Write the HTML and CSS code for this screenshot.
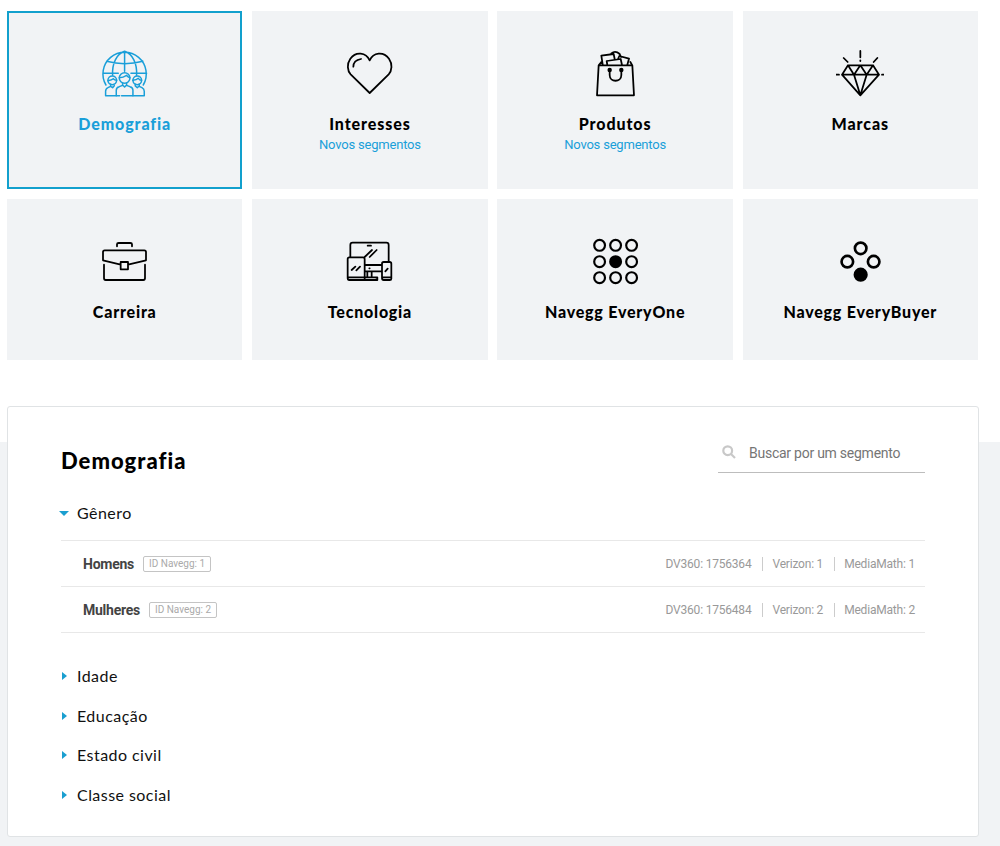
FILE: index.html
```html
<!DOCTYPE html>
<html lang="pt-BR">
<head>
<meta charset="utf-8">
<title>Segmentos</title>
<link rel="stylesheet" href="styles.css">
</head>
<body>
<main class="page">
  <nav class="cards">
    <a class="card card-active">
      <svg class="icon thin" viewBox="32.2 30 144 144">
        <path d="M47 135A65 65 0 1 1 159 135M103 34V94M38 100H84M122 100H169M49 64Q103 78 158 64M67 106C65 70 79 42 103 34C127 42 141 70 139 106"/>
        <circle cx="103" cy="114" r="16"/><path d="M87 113Q99 113 109 106Q113 112 119 113M97 129V135L103 141L109 135V129M78 167V151Q78 142 87 140L97 136M109 136L119 140Q128 142 128 151V167M78 167H88M94 167H128"/>
        <circle cx="66" cy="121" r="13"/><path d="M53 122Q65 120 69 116Q73 120 79 121M61 133V139L67 143L72 137M46 167V154Q46 146 53 143L61 139M46 167H78"/>
        <circle cx="141" cy="121" r="13"/><path d="M128 121Q139 120 144 115Q148 121 154 121M135 133V138L141 143L147 138V133M147 139L155 143Q162 147 162 154V167H128"/>
      </svg>
      <span class="name">Demografia</span>
    </a>
    <a class="card">
      <svg class="icon" viewBox="33 30 144 144">
        <path d="M104 159L47 103C37 92 35 72 46 56C63 33 93 37 104 61C115 37 145 33 162 56C173 72 171 92 161 103ZM55 80Q55 61 78 57"/>
      </svg>
      <span class="name">Interesses</span>
      <span class="note">Novos segmentos</span>
    </a>
    <a class="card">
      <svg class="icon" viewBox="33 30 144 144">
        <path d="M56 76H157L162 166H51ZM56 76L64 66M157 76L151 66M68 73L64 47L101 42L104 57M82 75L80 63L122 57L126 75M94 40Q106 30 119 42L123 51M114 57L118 48L147 56L142 74M89 94V105C89 128 124 128 124 105V94"/>
        <circle class="solid" cx="89" cy="90" r="4"/><circle class="solid" cx="124" cy="90" r="4"/>
      </svg>
      <span class="name">Produtos</span>
      <span class="note">Novos segmentos</span>
    </a>
    <a class="card">
      <svg class="icon" viewBox="33 30 144 144">
        <path d="M69 76H144L162 104L106 166L51 104ZM51 104H162M69 76L87 104L106 76L125 104L144 76M87 104L106 166L125 104M106 33V52M106 61V63M56 54L68 66M157 54L146 66M34 104H42M171 104H179"/>
      </svg>
      <span class="name">Marcas</span>
    </a>
    <a class="card">
      <svg class="icon" viewBox="33 21 144 144">
        <path d="M81 49V43Q81 39 86 39H121Q126 39 126 43V49M92 104L39 91V66Q39 61 44 61H163Q168 61 168 66V91L114 104M92 96H114V118H92ZM42 104V145Q42 150 47 150H160Q165 150 165 145V104"/>
      </svg>
      <span class="name">Carreira</span>
    </a>
    <a class="card">
      <svg class="icon" viewBox="33 21 144 144">
        <path d="M46 81V45Q46 38 53 38H154Q161 38 161 45V95M98 47H108M89 81L111 60M104 81L125 60M43 82H84Q89 82 89 88V150H43Q38 150 38 145V87Q38 82 43 82ZM38 142H127V150H43M89 105H141M89 124H141M97 124V142M110 124V142M127 150Q128 142 119 142M103 115H104M50 120L61 110M64 121L75 110M146 96H164Q169 96 169 101V146Q169 150 164 150H146Q141 150 141 145V101Q141 96 146 96ZM141 142H169M151 124L158 116"/>
      </svg>
      <span class="name">Tecnologia</span>
    </a>
    <a class="card">
      <svg class="icon dots" viewBox="32.2 21 144 144">
        <circle cx="58" cy="46" r="16.2"/><circle cx="106" cy="46" r="16.2"/><circle cx="154" cy="46" r="16.2"/>
        <circle cx="58" cy="95" r="16.2"/><circle class="solid" cx="106" cy="95" r="16.2"/><circle cx="154" cy="95" r="16.2"/>
        <circle cx="58" cy="143" r="16.2"/><circle cx="106" cy="143" r="16.2"/><circle cx="154" cy="143" r="16.2"/>
      </svg>
      <span class="name">Navegg EveryOne</span>
    </a>
    <a class="card">
      <svg class="icon dots-large" viewBox="768 21 144 144">
        <circle cx="842" cy="55" r="17.3"/><circle cx="802" cy="95" r="17.3"/><circle cx="881" cy="95" r="17.3"/><circle class="solid" cx="842" cy="134" r="17.3"/>
      </svg>
      <span class="name">Navegg EveryBuyer</span>
    </a>
  </nav>

  <div class="lower">
    <section class="panel">
      <header class="panel-head">
        <h1 class="title">Demografia</h1>
        <label class="search">
          <svg class="search-icon" viewBox="0 0 14 14"><circle cx="5.7" cy="5.7" r="4.4"/><path d="M9 9L13 13"/></svg>
          <input class="search-input" type="text" placeholder="Buscar por um segmento">
        </label>
      </header>
      <h2 class="group"><i class="arrow arrow-down"></i><span class="group-name">Gênero</span></h2>
      <ul class="rows">
        <li class="row">
          <b class="segment">Homens</b><span class="tag">ID Navegg: 1</span>
          <span class="ids"><span class="id">DV360: 1756364</span><span class="id">Verizon: 1</span><span class="id">MediaMath: 1</span></span>
        </li>
        <li class="row">
          <b class="segment">Mulheres</b><span class="tag">ID Navegg: 2</span>
          <span class="ids"><span class="id">DV360: 1756484</span><span class="id">Verizon: 2</span><span class="id">MediaMath: 2</span></span>
        </li>
      </ul>
      <div class="closed">
        <h2 class="group"><i class="arrow"></i><span class="group-name">Idade</span></h2>
        <h2 class="group"><i class="arrow"></i><span class="group-name">Educação</span></h2>
        <h2 class="group"><i class="arrow"></i><span class="group-name">Estado civil</span></h2>
        <h2 class="group"><i class="arrow"></i><span class="group-name">Classe social</span></h2>
      </div>
    </section>
  </div>
</main>
</body>
</html>
```
FILE: styles.css
```css
* { box-sizing: border-box; }
body { margin: 0; background: #fff; color: #000; font-family: Roboto, "Liberation Sans", sans-serif; }
.page { height: 846px; overflow: hidden; display: flex; flex-direction: column; }
.cards {
  display: grid;
  grid-template-columns: repeat(4, 1fr);
  grid-template-rows: 178px 161px;
  gap: 10px 9.75px;
  width: 971px;
  margin: 11px 0 0 7px;
}
.card {
  display: flex;
  flex-direction: column;
  align-items: center;
  padding-top: 37px;
  border: 2px solid #f1f3f5;
  background: #f1f3f5;
}
.card-active { border-color: #12a0cd; color: #1a9fd9; }
.card:nth-child(n+5) { padding-top: 36px; }
.icon { width: 48px; height: 48px; fill: none; stroke: currentColor; stroke-width: 5.3; stroke-linejoin: round; stroke-linecap: round; }
.thin { stroke-width: 4.5; }
.dots { stroke-width: 6.5; }
.dots-large { stroke-width: 8; }
.solid { fill: currentColor; }
.name { margin-top: 16px; font: 900 16px/20px Lato, sans-serif; letter-spacing: .9px; }
.card:nth-child(n+5) .name { margin-top: 17px; letter-spacing: .78px; }
.note { margin-top: 1px; font-size: 13px; line-height: 20px; letter-spacing: -.2px; color: #1a9fd9; }

.lower {
  flex: 1;
  margin-top: 46px;
  padding-left: 7px;
  background: linear-gradient(#fff 36px, #f1f3f5 36px);
}
.panel {
  width: 972px;
  height: 431px;
  padding: 36px 53px 0;
  border: 1px solid #e0e3e5;
  border-radius: 3px;
  background: #fff;
}
.panel-head { display: flex; justify-content: space-between; height: 50px; }
.title { margin: 4px 0 0; font: 900 22px/28px Lato, sans-serif; letter-spacing: 1px; }
.search { display: flex; width: 207px; height: 30px; padding-left: 4px; border-bottom: 1px solid #bdbdbd; }
.search-icon { width: 14px; height: 14px; margin-top: 2px; fill: none; stroke: #c8c8c8; stroke-width: 2.2; }
.search-input { width: 176px; height: 20px; margin-left: 13px; padding: 0; border: 0; outline: 0; background: none; font: 14px/20px Roboto, sans-serif; letter-spacing: -.25px; }
.search-input::placeholder { color: #757575; }
.group { display: flex; align-items: center; height: 39.6px; margin: 0; font: 400 16px/20px Lato, sans-serif; color: #111; }
.group-name { letter-spacing: .45px; }
.arrow { width: 16px; height: 10px; }
.arrow::before { content: ""; display: block; width: 0; margin: 1px 0 0 1px; border: 4.5px solid transparent; border-left: 5px solid #1a9fd0; border-right: 0; }
.arrow-down::before { margin: 3px 0 0 -2px; border: 5px solid transparent; border-top-color: #1a9fd0; border-bottom: 0; }
.rows { margin: 7px 0 0; padding: 0; list-style: none; border-top: 1px solid #e8e8e8; }
.row { display: flex; align-items: center; height: 46px; padding: 2px 10px 0 22px; border-bottom: 1px solid #e8e8e8; }
.segment { font-size: 14px; font-weight: 700; letter-spacing: -.25px; color: #444; }
.tag { margin-left: 9px; height: 16px; padding: 0 5px; border: 1px solid #c4c4c4; border-radius: 2px; font-size: 10px; line-height: 14px; color: #aaa; }
.ids { display: flex; margin-left: auto; font-size: 12px; line-height: 14px; letter-spacing: -.2px; color: #999; }
.id + .id { margin-left: 11px; padding-left: 9px; border-left: 1px solid #ccc; }
.closed { margin-top: 23.6px; }
```
